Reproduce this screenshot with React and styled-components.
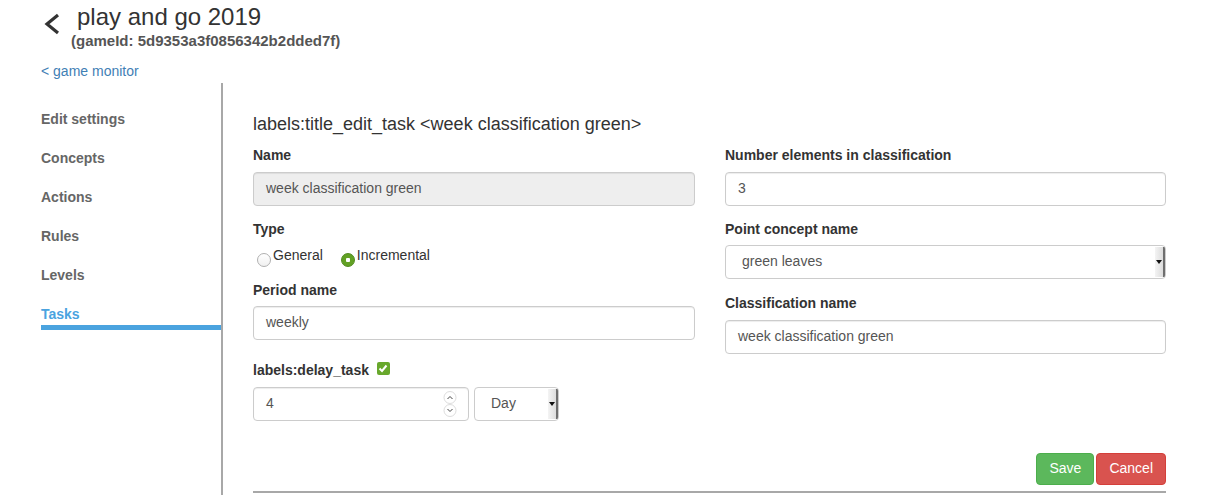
import React from "react";
import styled, { createGlobalStyle } from "styled-components";

const GlobalStyle = createGlobalStyle`
  html, body {
    margin: 0;
    padding: 0;
    background: #fff;
    font-family: "Liberation Sans", Arial, sans-serif;
    font-size: 14px;
    color: #333;
  }
`;

const Page = styled.div`
  display: flex;
  flex-direction: column;
  min-height: 100vh;
`;

const Header = styled.div`
  display: flex;
  align-items: flex-start;
  padding: 3px 0 0 42px;
`;

const Back = styled.svg`
  width: 20px;
  height: 24px;
  margin-top: 9px;
  flex-shrink: 0;
`;

const TitleBlock = styled.div`
  display: flex;
  flex-direction: column;
  margin-left: 9px;
`;

const GameTitle = styled.h1`
  margin: 0;
  padding-left: 6px;
  font-size: 24px;
  line-height: 27px;
  font-weight: 400;
  color: #333;
`;

const GameId = styled.div`
  margin-top: 2px;
  font-size: 15px;
  line-height: 17px;
  font-weight: 700;
  color: #555;
`;

const MonitorLink = styled.a`
  display: block;
  margin: 14px 0 0 41px;
  font-size: 14px;
  line-height: 16px;
  color: #3f80b5;
  text-decoration: none;
`;

const Body = styled.div`
  flex: 1;
  display: flex;
  margin-top: 4px;
`;

const Sidebar = styled.nav`
  width: 180px;
  margin-left: 41px;
  padding-top: 26px;
  border-right: 2px solid #a8a8a8;
`;

const NavItem = styled.div`
  font-size: 14px;
  line-height: 20px;
  font-weight: 700;
  color: ${(p) => (p.$active ? "#4aa3df" : "#666")};
  margin-bottom: 19px;
  padding-bottom: ${(p) => (p.$active ? "1px" : "0")};
  border-bottom: ${(p) => (p.$active ? "5px solid #4aa3df" : "none")};
`;

const Main = styled.main`
  width: 913px;
  padding: 31px 0 0 30px;
  display: flex;
  flex-direction: column;
`;

const FormTitle = styled.h3`
  margin: 0 0 11px;
  font-size: 18px;
  line-height: 20px;
  font-weight: 400;
  color: #333;
`;

const Columns = styled.div`
  display: grid;
  grid-template-columns: 442px 441px;
  column-gap: 30px;
`;

const Column = styled.div`
  display: flex;
  flex-direction: column;
`;

const Group = styled.div`
  margin-bottom: ${(p) => p.$mb ?? 13}px;
`;

const Label = styled.div`
  display: flex;
  align-items: center;
  gap: 8px;
  font-size: 14px;
  line-height: 20px;
  font-weight: 700;
  color: #333;
  margin-bottom: ${(p) => p.$mb ?? 7}px;
`;

const Input = styled.div`
  box-sizing: border-box;
  height: 34px;
  width: ${(p) => p.$w || "100%"};
  padding: 0 12px 2px;
  display: flex;
  align-items: center;
  justify-content: space-between;
  border: 1px solid #ccc;
  border-radius: 4px;
  background: ${(p) => (p.$disabled ? "#eee" : "#fff")};
  box-shadow: inset 0 1px 1px rgba(0, 0, 0, 0.075);
  font-size: 14px;
  color: #555;
`;

const Select = styled.div`
  box-sizing: border-box;
  height: 34px;
  width: ${(p) => p.$w || "100%"};
  padding-left: ${(p) => p.$pl || 16}px;
  display: flex;
  align-items: center;
  justify-content: space-between;
  border: 1px solid #ccc;
  border-radius: 4px;
  background: #fff;
  font-size: 14px;
  color: #555;
  overflow: hidden;
`;

const SelectText = styled.span`
  padding-bottom: 2px;
`;

const SelectArrow = styled.div`
  align-self: stretch;
  width: 8px;
  margin: 1px 0;
  display: flex;
  align-items: center;
  justify-content: center;
  background: linear-gradient(to right, #f4f4f4, #dcdcdc);
  border-right: 2px solid #6e6e6e;
  &::after {
    content: "";
    border-left: 3px solid transparent;
    border-right: 3px solid transparent;
    border-top: 4px solid #111;
  }
`;

const RadioRow = styled.div`
  display: flex;
  align-items: flex-end;
  gap: 18px;
  margin-left: 4px;
  height: 20px;
`;

const RadioOption = styled.label`
  display: flex;
  align-items: flex-end;
  font-size: 14px;
  line-height: 18px;
  color: #333;
`;

const RadioDot = styled.span`
  box-sizing: border-box;
  width: 14px;
  height: 14px;
  border-radius: 50%;
  margin-bottom: -3px;
  margin-right: 2px;
  border: 1px solid ${(p) => (p.$checked ? "#4f8a1c" : "#b0b0b0")};
  background: ${(p) =>
    p.$checked
      ? "radial-gradient(circle, #fff 0 2px, #62a124 2.5px)"
      : "linear-gradient(#fff, #f0f0f0)"};
`;

const CheckBox = styled.span`
  width: 13px;
  height: 13px;
  border-radius: 2px;
  background: #68a82c;
  display: flex;
  align-items: center;
  justify-content: center;
  margin-top: -3px;
`;

const DelayRow = styled.div`
  display: flex;
  gap: 5px;
`;

const Spinner = styled.svg`
  width: 14px;
  height: 28px;
  margin: 2px -1px 0 0;
`;

const Actions = styled.div`
  display: flex;
  justify-content: flex-end;
  gap: 2px;
  margin-top: 32px;
  padding-bottom: 6px;
  border-bottom: 2px solid #a8a8a8;
`;

const Button = styled.button`
  height: 32px;
  padding: 0 12px 2px;
  border-radius: 4px;
  border: 1px solid ${(p) => (p.$variant === "danger" ? "#d43f3a" : "#4cae4c")};
  background: ${(p) => (p.$variant === "danger" ? "#d9534f" : "#5cb85c")};
  color: #fff;
  font-family: inherit;
  font-size: 14px;
`;

const App = () => {
  return (
    <Page>
      <GlobalStyle />
      <Header>
        <Back viewBox="0 0 20 24">
          <polyline points="16,3 5,12 16,21" fill="none" stroke="#333" strokeWidth="3.2" />
        </Back>
        <TitleBlock>
          <GameTitle>play and go 2019</GameTitle>
          <GameId>(gameId: 5d9353a3f0856342b2dded7f)</GameId>
        </TitleBlock>
      </Header>
      <MonitorLink href="#">&lt; game monitor</MonitorLink>
      <Body>
        <Sidebar>
          <NavItem>Edit settings</NavItem>
          <NavItem>Concepts</NavItem>
          <NavItem>Actions</NavItem>
          <NavItem>Rules</NavItem>
          <NavItem>Levels</NavItem>
          <NavItem $active>Tasks</NavItem>
        </Sidebar>
        <Main>
          <FormTitle>labels:title_edit_task &lt;week classification green&gt;</FormTitle>
          <Columns>
            <Column>
              <Group>
                <Label>Name</Label>
                <Input $disabled>week classification green</Input>
              </Group>
              <Group $mb={16}>
                <Label $mb={5}>Type</Label>
                <RadioRow>
                  <RadioOption>
                    <RadioDot />
                    General
                  </RadioOption>
                  <RadioOption>
                    <RadioDot $checked />
                    Incremental
                  </RadioOption>
                </RadioRow>
              </Group>
              <Group $mb={20}>
                <Label $mb={6}>Period name</Label>
                <Input>weekly</Input>
              </Group>
              <Group $mb={0}>
                <Label $mb={7}>
                  labels:delay_task
                  <CheckBox>
                    <svg width="10" height="9" viewBox="0 0 10 9">
                      <polyline points="1.5,4.5 4,7 8.5,1.5" fill="none" stroke="#fff" strokeWidth="2" />
                    </svg>
                  </CheckBox>
                </Label>
                <DelayRow>
                  <Input $w="216px">
                    4
                    <Spinner viewBox="0 0 14 28">
                      <circle cx="7" cy="7.5" r="6" fill="none" stroke="#ddd" />
                      <circle cx="7" cy="20.5" r="6" fill="none" stroke="#ddd" />
                      <polyline points="4.5,9 7,6.5 9.5,9" fill="none" stroke="#444" strokeWidth="1" />
                      <polyline points="4.5,19 7,21.5 9.5,19" fill="none" stroke="#444" strokeWidth="1" />
                    </Spinner>
                  </Input>
                  <Select $w="85px">
                    <SelectText>Day</SelectText>
                    <SelectArrow />
                  </Select>
                </DelayRow>
              </Group>
            </Column>
            <Column>
              <Group>
                <Label>Number elements in classification</Label>
                <Input>3</Input>
              </Group>
              <Group $mb={14}>
                <Label $mb={6}>Point concept name</Label>
                <Select>
                  <SelectText>green leaves</SelectText>
                  <SelectArrow />
                </Select>
              </Group>
              <Group $mb={0}>
                <Label $mb={7}>Classification name</Label>
                <Input>week classification green</Input>
              </Group>
            </Column>
          </Columns>
          <Actions>
            <Button>Save</Button>
            <Button $variant="danger">Cancel</Button>
          </Actions>
        </Main>
      </Body>
    </Page>
  );
};

export default App;
